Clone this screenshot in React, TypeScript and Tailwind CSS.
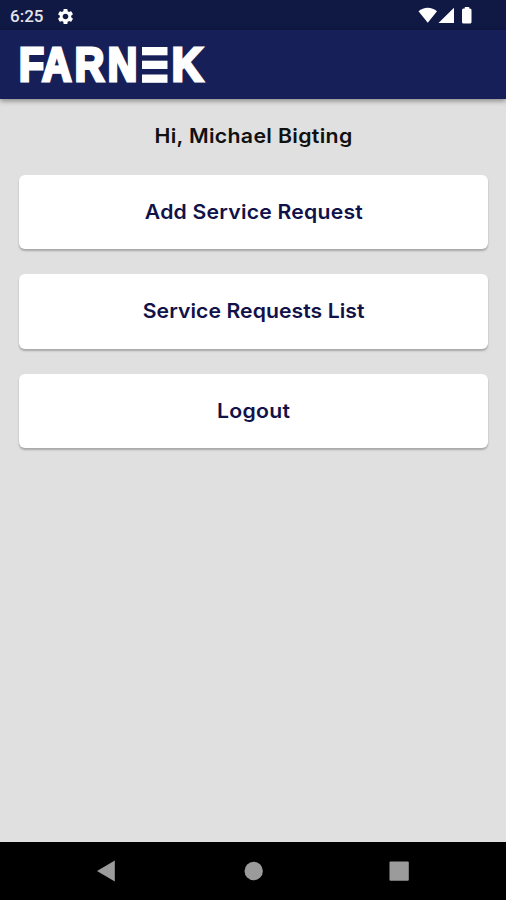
import { MdSettings } from "react-icons/md";

const menuItems = [
  { label: "Add Service Request", tracking: "tracking-[0.2px]" },
  { label: "Service Requests List", tracking: "tracking-[0.05px]" },
  { label: "Logout", tracking: "tracking-[0.3px]" },
];

function StatusBar() {
  return (
    <div className="h-[30px] shrink-0 bg-[#101844] flex items-center justify-between pl-[10px] pr-[32px] pt-[2px] text-white">
      <div className="flex items-center gap-[13px]">
        <span className="font-[Roboto,sans-serif] text-[17px] font-medium leading-none text-[#e4e4ea]">6:25</span>
        <MdSettings className="text-[19px]" />
      </div>
      <svg width="56" height="18" viewBox="0 0 56 18" fill="currentColor">
        <path d="M0.5 4.3C5.5-.6 14-.6 19 4.3L9.75 15.8Z" />
        <path d="M36 0.8V16H20.5Z" />
        <path d="M46.8 0h4.4v1.5h.8q1.5 0 1.5 1.5v12q0 1.5-1.5 1.5h-6.500q-1.500 0-1.500-1.500v-12q0-1.500 1.500-1.500h1.300Z" />
      </svg>
    </div>
  );
}

function Logo() {
  return (
    <svg
      width="200"
      height="60"
      viewBox="0 0 200 60"
      fill="#fff"
      className="font-['Liberation_Sans',sans-serif] text-[47.5px] font-bold"
    >
      <g stroke="#fff" strokeWidth="3.2" strokeLinejoin="miter">
        <text transform="scale(0.86 1)" x="1.2 27.8 66 104.5" y="46.2">
          FARN
        </text>
        <text transform="scale(0.91 1)" x="169" y="46.2">
          K
        </text>
      </g>
      <rect x="124" y="12" width="25.5" height="8.3" />
      <rect x="124" y="25.7" width="25.5" height="8.3" />
      <rect x="124" y="39.5" width="25.5" height="8.3" />
    </svg>
  );
}

function NavBar() {
  return (
    <div className="h-[58px] shrink-0 bg-black flex items-center text-[#9b9b9b]">
      <svg width="506" height="58" viewBox="0 0 506 58" fill="currentColor">
        <path d="M97 29L114.8 18.5V39.5Z" />
        <circle cx="253.7" cy="29" r="9.2" />
        <rect x="389.5" y="19.5" width="19.3" height="19.3" rx="1" />
      </svg>
    </div>
  );
}

export default function App() {
  return (
    <div className="w-full h-screen flex flex-col bg-[#e0e0e0] font-[Inter,sans-serif] overflow-hidden">
      <StatusBar />
      <header className="h-[69px] shrink-0 bg-[#171f59] flex items-center pl-[18px] shadow-[0_2px_5px_rgba(0,0,0,0.4)]">
        <Logo />
      </header>

      <main className="flex-1 flex flex-col pl-[19px] pr-[18px] pt-[22px]">
        <h1 className="text-center text-[20px] leading-[30px] font-semibold tracking-[0.3px] text-[#111] scale-x-[1.065]">
          Hi, Michael Bigting
        </h1>
        <div className="mt-[23.5px] flex flex-col gap-[25px]">
          {menuItems.map((item) => (
            <button
              key={item.label}
              className="h-[74.5px] rounded-[6px] bg-white text-[20px] font-semibold text-[#12124a] shadow-[0_2px_2px_rgba(0,0,0,0.25)]"
            >
              <span className={`inline-block scale-x-[1.06] ${item.tracking}`}>{item.label}</span>
            </button>
          ))}
        </div>
      </main>

      <NavBar />
    </div>
  );
}
